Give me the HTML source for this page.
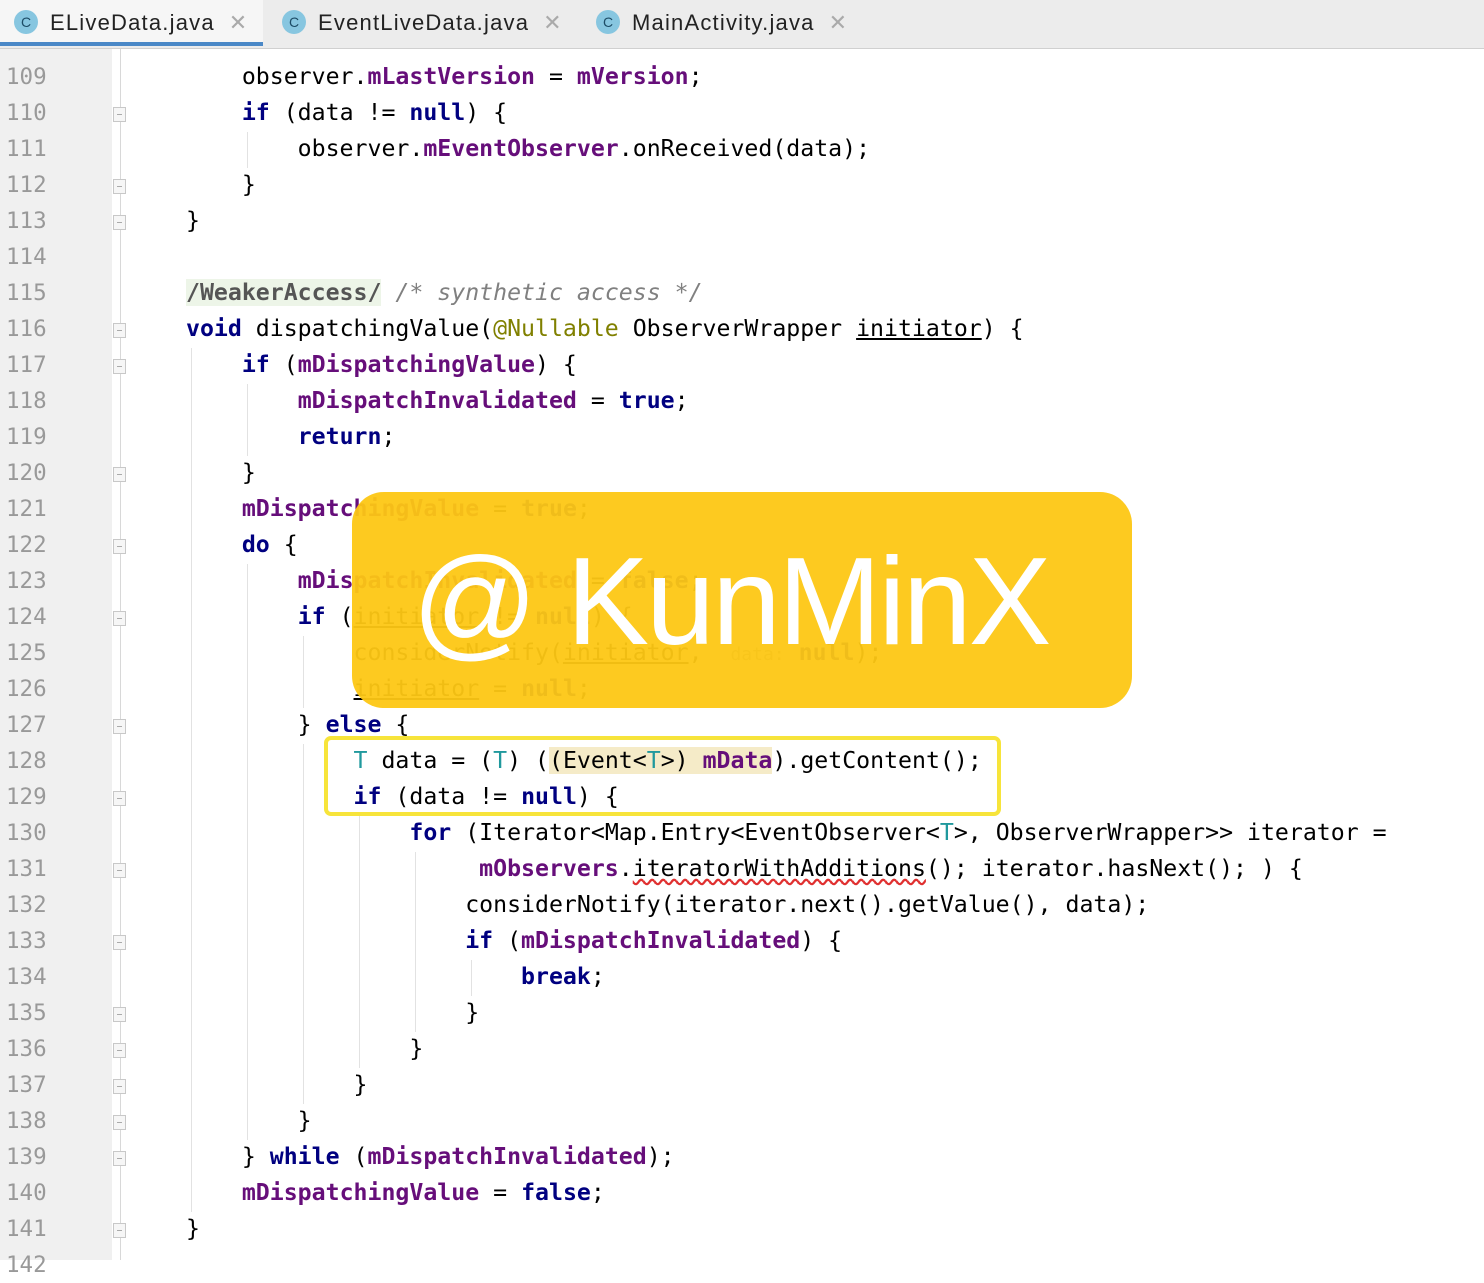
<!DOCTYPE html>
<html><head><meta charset="utf-8"><style>
body{margin:0;width:1484px;height:1260px;overflow:hidden;background:#fff;position:relative;font-family:"DejaVu Sans Mono","Liberation Mono",monospace}
.tabs{position:absolute;left:0;top:0;width:1484px;height:48px;background:#ececec;border-bottom:1px solid #d0d0d0;font-family:"Liberation Sans",sans-serif;font-size:22px;letter-spacing:1.2px;color:#222}
.tab{position:absolute;top:0;height:46px;line-height:46px}
.ic{display:inline-block;width:24px;height:24px;border-radius:50%;background:#87c6e0;color:#1d4c66;font-size:14px;line-height:24px;text-align:center;vertical-align:middle;margin-right:12px;position:relative;top:-2px;letter-spacing:0}
.x{color:#aaa;margin-left:14px}
.gut{position:absolute;left:0;top:49px;width:112px;height:1211px;background:#f0f0f0}
.gl{position:absolute;left:120px;top:49px;width:1px;height:1211px;background:#d8d8d8}
.ln{position:absolute;left:6px;font-size:22.5px;color:#999;height:36px;line-height:36px}
.c{position:absolute;left:186px;font-size:23.2px;height:36px;line-height:36px;white-space:pre;color:#000}
.k{color:#000080;font-weight:bold}.f{color:#660e7a;font-weight:bold}.a{color:#808000}.cm{color:#808080;font-style:italic}.t{color:#20999d}
.fold{position:absolute;left:113px;width:13px;height:15px;border:1px solid #c8c8c8;background:#f6f6f6;box-sizing:border-box}
.fold:after{content:"";position:absolute;left:3px;top:6px;width:5px;height:1px;background:#aaa}
.g{position:absolute;width:1px;background:#e2e2e2}
</style></head><body>
<div class="tabs">
<div class="tab" style="left:0;width:263px;background:#f6f6f6;border-bottom:4px solid #4a88c7;padding-left:14px;box-sizing:border-box"><span class="ic">C</span>ELiveData.java<span class="x">✕</span></div>
<div class="tab" style="left:282px"><span class="ic">C</span>EventLiveData.java<span class="x">✕</span></div>
<div class="tab" style="left:596px"><span class="ic">C</span>MainActivity.java<span class="x">✕</span></div>
</div>
<div class="gut"></div><div class="gl"></div>
<div class="g" style="left:247px;top:132px;height:36px"></div>
<div class="g" style="left:191px;top:348px;height:864px"></div>
<div class="g" style="left:247px;top:384px;height:72px"></div>
<div class="g" style="left:247px;top:564px;height:576px"></div>
<div class="g" style="left:303px;top:636px;height:72px"></div>
<div class="g" style="left:303px;top:744px;height:360px"></div>
<div class="g" style="left:359px;top:816px;height:252px"></div>
<div class="g" style="left:415px;top:852px;height:180px"></div>
<div class="g" style="left:471px;top:960px;height:36px"></div>
<div class="fold" style="top:107px"></div><div class="fold" style="top:179px"></div><div class="fold" style="top:215px"></div>
<div class="fold" style="top:323px"></div><div class="fold" style="top:359px"></div><div class="fold" style="top:467px"></div>
<div class="fold" style="top:539px"></div><div class="fold" style="top:611px"></div><div class="fold" style="top:719px"></div>
<div class="fold" style="top:791px"></div><div class="fold" style="top:863px"></div><div class="fold" style="top:935px"></div>
<div class="fold" style="top:1007px"></div><div class="fold" style="top:1043px"></div><div class="fold" style="top:1079px"></div>
<div class="fold" style="top:1115px"></div><div class="fold" style="top:1151px"></div><div class="fold" style="top:1223px"></div>
<div class="ln" style="top:59px">109</div><div class="ln" style="top:95px">110</div><div class="ln" style="top:131px">111</div><div class="ln" style="top:167px">112</div><div class="ln" style="top:203px">113</div><div class="ln" style="top:239px">114</div><div class="ln" style="top:275px">115</div><div class="ln" style="top:311px">116</div><div class="ln" style="top:347px">117</div><div class="ln" style="top:383px">118</div><div class="ln" style="top:419px">119</div><div class="ln" style="top:455px">120</div><div class="ln" style="top:491px">121</div><div class="ln" style="top:527px">122</div><div class="ln" style="top:563px">123</div><div class="ln" style="top:599px">124</div><div class="ln" style="top:635px">125</div><div class="ln" style="top:671px">126</div><div class="ln" style="top:707px">127</div><div class="ln" style="top:743px">128</div><div class="ln" style="top:779px">129</div><div class="ln" style="top:815px">130</div><div class="ln" style="top:851px">131</div><div class="ln" style="top:887px">132</div><div class="ln" style="top:923px">133</div><div class="ln" style="top:959px">134</div><div class="ln" style="top:995px">135</div><div class="ln" style="top:1031px">136</div><div class="ln" style="top:1067px">137</div><div class="ln" style="top:1103px">138</div><div class="ln" style="top:1139px">139</div><div class="ln" style="top:1175px">140</div><div class="ln" style="top:1211px">141</div><div class="ln" style="top:1247px">142</div>
<div class="c" style="top:59px">    observer.<span class="f">mLastVersion</span> = <span class="f">mVersion</span>;</div>
<div class="c" style="top:95px">    <span class="k">if</span> (data != <span class="k">null</span>) {</div>
<div class="c" style="top:131px">        observer.<span class="f">mEventObserver</span>.onReceived(data);</div>
<div class="c" style="top:167px">    }</div>
<div class="c" style="top:203px">}</div>
<div class="c" style="top:275px"><span style="background:#edf5e8;color:#555;font-weight:bold">/WeakerAccess/</span> <span class="cm">/* synthetic access */</span></div>
<div class="c" style="top:311px"><span class="k">void</span> dispatchingValue(<span class="a">@Nullable</span> ObserverWrapper <u>initiator</u>) {</div>
<div class="c" style="top:347px">    <span class="k">if</span> (<span class="f">mDispatchingValue</span>) {</div>
<div class="c" style="top:383px">        <span class="f">mDispatchInvalidated</span> = <span class="k">true</span>;</div>
<div class="c" style="top:419px">        <span class="k">return</span>;</div>
<div class="c" style="top:455px">    }</div>
<div class="c" style="top:491px">    <span class="f">mDispatchingValue</span> = <span class="k">true</span>;</div>
<div class="c" style="top:527px">    <span class="k">do</span> {</div>
<div class="c" style="top:563px">        <span class="f">mDispatchInvalidated</span> = <span class="k">false</span>;</div>
<div class="c" style="top:599px">        <span class="k">if</span> (<u>initiator</u> != <span class="k">null</span>) {</div>
<div class="c" style="top:635px">            considerNotify(<u>initiator</u>,  <span style="color:#999;font-size:18px">data:</span> <span class="k">null</span>);</div>
<div class="c" style="top:671px">            <u>initiator</u> = <span class="k">null</span>;</div>
<div class="c" style="top:707px">        } <span class="k">else</span> {</div>
<div class="c" style="top:743px">            <span class="t">T</span> data = (<span class="t">T</span>) (<span style="background:#f5ebc8">(Event&lt;<span class="t">T</span>&gt;) <span class="f">mData</span></span>).getContent();</div>
<div class="c" style="top:779px">            <span class="k">if</span> (data != <span class="k">null</span>) {</div>
<div class="c" style="top:815px">                <span class="k">for</span> (Iterator&lt;Map.Entry&lt;EventObserver&lt;<span class="t">T</span>&gt;, ObserverWrapper&gt;&gt; iterator =</div>
<div class="c" style="top:851px">                     <span class="f">mObservers</span>.<span style="text-decoration:underline wavy #e03030">iteratorWithAdditions</span>(); iterator.hasNext(); ) {</div>
<div class="c" style="top:887px">                    considerNotify(iterator.next().getValue(), data);</div>
<div class="c" style="top:923px">                    <span class="k">if</span> (<span class="f">mDispatchInvalidated</span>) {</div>
<div class="c" style="top:959px">                        <span class="k">break</span>;</div>
<div class="c" style="top:995px">                    }</div>
<div class="c" style="top:1031px">                }</div>
<div class="c" style="top:1067px">            }</div>
<div class="c" style="top:1103px">        }</div>
<div class="c" style="top:1139px">    } <span class="k">while</span> (<span class="f">mDispatchInvalidated</span>);</div>
<div class="c" style="top:1175px">    <span class="f">mDispatchingValue</span> = <span class="k">false</span>;</div>
<div class="c" style="top:1211px">}</div>
<div style="position:absolute;left:352px;top:492px;width:780px;height:216px;border-radius:32px;background:rgba(253,199,20,0.95)"></div>
<div style="position:absolute;left:412px;top:535px;font-family:'Liberation Sans',sans-serif;font-size:124px;line-height:134px;color:#fff;letter-spacing:-3px">@ KunMinX</div>
<div style="position:absolute;left:324px;top:736px;width:677px;height:80px;border:4px solid #f7e43a;border-radius:7px;box-sizing:border-box"></div>
</body></html>
